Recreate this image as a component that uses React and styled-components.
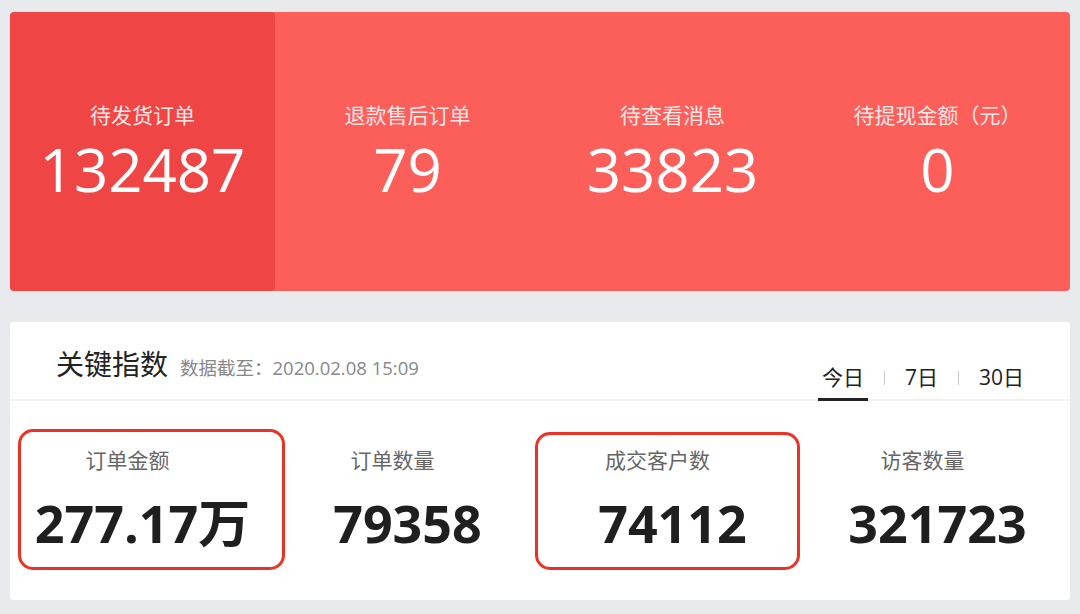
import React from "react";
import styled, { createGlobalStyle } from "styled-components";

const Global = createGlobalStyle`
  html, body { margin: 0; padding: 0; background: #e9eaee; }
  body { font-family: "Open Sans", "Noto Sans CJK SC", sans-serif; }
  * { box-sizing: border-box; }
`;

const Page = styled.div`
  width: 1080px;
  height: 614px;
  padding: 12px 10px 0;
  display: flex;
  flex-direction: column;
  gap: 31px;
`;

const Banner = styled.div`
  height: 279px;
  display: grid;
  grid-template-columns: repeat(4, 1fr);
  background: #fc5e5a;
  border-radius: 4px;
  overflow: hidden;
`;

const BannerCell = styled.div`
  display: flex;
  flex-direction: column;
  align-items: center;
  justify-content: center;
  padding-top: 2px;
  background: ${(p) => (p.$active ? "#f04545" : "transparent")};
  color: #fff;
  border-radius: ${(p) => (p.$active ? "4px" : "0")};
`;

const BannerLabel = styled.div`
  font-family: "Noto Sans CJK SC", sans-serif;
  font-size: 21px;
  line-height: 28px;
  color: #fde9e8;
`;

const BannerValue = styled.div`
  font-family: "Open Sans", sans-serif;
  font-weight: 400;
  font-size: 60px;
  line-height: 74px;
  margin-top: 4px;
`;

const Card = styled.div`
  height: 278px;
  background: #fff;
  border-radius: 4px;
  display: flex;
  flex-direction: column;
`;

const CardHeader = styled.div`
  height: 79px;
  border-bottom: 2px solid #f0f0f2;
  display: flex;
  align-items: flex-start;
  justify-content: space-between;
  padding: 0 42px 0 46px;
`;

const TitleGroup = styled.div`
  display: flex;
  align-items: baseline;
  gap: 12px;
  padding-top: 24px;
`;

const Title = styled.div`
  font-family: "Noto Sans CJK SC", sans-serif;
  font-size: 28px;
  line-height: 34px;
  color: #222;
`;

const Subtitle = styled.div`
  font-family: "Open Sans", "Noto Sans CJK SC", sans-serif;
  font-size: 18.5px;
  color: #888;
`;

const Tabs = styled.div`
  display: flex;
  align-items: flex-end;
  align-self: flex-end;
  margin-bottom: -2px;
`;

const Tab = styled.div`
  font-family: "Open Sans", "Noto Sans CJK SC", sans-serif;
  font-size: 21px;
  line-height: 24px;
  color: #222;
  padding: 0 4px 9px;
  border-bottom: 3px solid ${(p) => (p.$active ? "#222" : "transparent")};
`;

const Sep = styled.div`
  width: 1px;
  height: 14px;
  background: #ccc;
  margin: 0 16px 16px;
`;

const Metrics = styled.div`
  flex: 1;
  display: grid;
  grid-template-columns: repeat(4, 1fr);
`;

const Metric = styled.div`
  position: relative;
  display: flex;
  flex-direction: column;
  align-items: center;
  padding-top: 44px;

  &::after {
    content: "";
    display: ${(p) => (p.$highlight ? "block" : "none")};
    position: absolute;
    top: ${(p) => p.$top}px;
    height: ${(p) => p.$h}px;
    left: ${(p) => p.$left}px;
    right: ${(p) => p.$right}px;
    border: 3px solid #ec3126;
    border-radius: 15px;
    pointer-events: none;
  }
`;

const MetricLabel = styled.div`
  font-family: "Noto Sans CJK SC", sans-serif;
  font-size: 21px;
  line-height: 28px;
  color: #666;
  padding-right: 30px;
`;

const MetricValue = styled.div`
  font-family: "Open Sans", "Noto Sans CJK SC", sans-serif;
  font-weight: 700;
  font-size: 52px;
  line-height: 62px;
  color: #1f1f1f;
  margin-top: 19px;
`;

const banner = [
  { label: "待发货订单", value: "132487", active: true },
  { label: "退款售后订单", value: "79" },
  { label: "待查看消息", value: "33823" },
  { label: "待提现金额（元）", value: "0" },
];

const metrics = [
  { label: "订单金额", value: "277.17万", hl: { top: 28, h: 135, left: 8, right: -10 } },
  { label: "订单数量", value: "79358" },
  { label: "成交客户数", value: "74112", hl: { top: 31, h: 132, left: -5, right: 5 } },
  { label: "访客数量", value: "321723" },
];

export default function App() {
  return (
    <>
      <Global />
      <Page>
        <Banner>
          {banner.map((b) => (
            <BannerCell key={b.label} $active={b.active}>
              <BannerLabel>{b.label}</BannerLabel>
              <BannerValue>{b.value}</BannerValue>
            </BannerCell>
          ))}
        </Banner>
        <Card>
          <CardHeader>
            <TitleGroup>
              <Title>关键指数</Title>
              <Subtitle>数据截至：2020.02.08 15:09</Subtitle>
            </TitleGroup>
            <Tabs>
              <Tab $active>今日</Tab>
              <Sep />
              <Tab>7日</Tab>
              <Sep />
              <Tab>30日</Tab>
            </Tabs>
          </CardHeader>
          <Metrics>
            {metrics.map((m) => (
              <Metric
                key={m.label}
                $highlight={!!m.hl}
                $top={m.hl?.top ?? 0}
                $h={m.hl?.h ?? 0}
                $left={m.hl?.left ?? 0}
                $right={m.hl?.right ?? 0}
              >
                <MetricLabel>{m.label}</MetricLabel>
                <MetricValue>{m.value}</MetricValue>
              </Metric>
            ))}
          </Metrics>
        </Card>
      </Page>
    </>
  );
}
